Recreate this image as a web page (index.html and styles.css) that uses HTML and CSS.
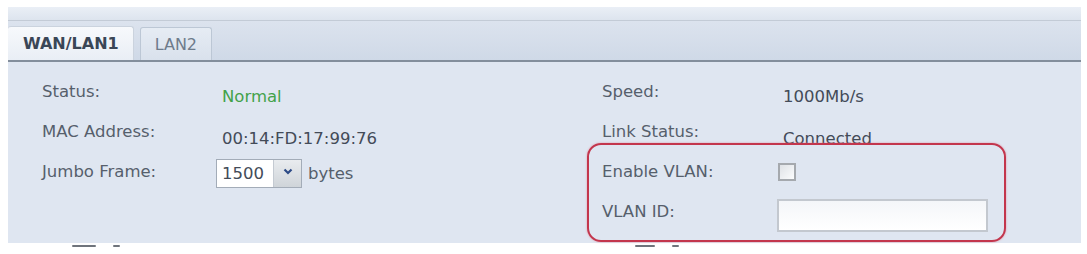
FILE: index.html
```html
<!DOCTYPE html>
<html lang="en">
<head>
  <meta charset="UTF-8">
  <title>Network - WAN/LAN1</title>
  <link rel="stylesheet" href="styles.css">
</head>
<body>
  <div class="panel">
    <div class="panel-top"></div>
    <!-- Tabs -->
    <div class="tab-bar">
      <div class="tab active">WAN/LAN1</div>
      <div class="tab">LAN2</div>
    </div>
    <!-- Interface settings -->
    <div class="form-grid">
      <div class="label">Status:</div>
      <div class="value ok">Normal</div>
      <div class="label">Speed:</div>
      <div class="value">1000Mb/s</div>

      <div class="label">MAC Address:</div>
      <div class="value mac">00:14:FD:17:99:76</div>
      <div class="label">Link Status:</div>
      <div class="value link">Connected</div>

      <div class="label">Jumbo Frame:</div>
      <div class="field">
        <div class="select">
          <span class="select-text">1500</span>
          <span class="select-btn">
            <svg width="10" height="7" viewBox="0 0 10 7"><path d="M1.5 1.5 L5 5 L8.5 1.5" fill="none" stroke="#2c4a86" stroke-width="2.2"/></svg>
          </span>
        </div>
        <span class="unit">bytes</span>
      </div>
      <div class="label">Enable VLAN:</div>
      <div class="field"><span class="checkbox"></span></div>

      <div class="label"></div>
      <div class="field"></div>
      <div class="label">VLAN ID:</div>
      <div class="field"><input type="text" class="text-input"></div>
    </div>
    <!-- Highlight drawn around the VLAN settings -->
    <div class="vlan-mark"></div>
  </div>
  <!-- Next section headers, cut off by the window -->
  <div class="next-section">
    <span class="cut cut-a"></span><span class="cut cut-b"></span>
    <span class="cut cut-c"></span><span class="cut cut-d"></span>
  </div>
</body>
</html>
```

FILE: styles.css
```css
body {
  margin: 0;
  padding: 0;
  background: #fff;
  font-family: 'DejaVu Sans', Verdana, sans-serif;
  overflow: hidden;
}
.panel {
  position: relative;
  margin: 7px 6px 0 8px;
  background: #dfe6f1;
}
.panel-top {
  height: 13px;
  background: linear-gradient(#eaeff6, #dde4ee);
  border-bottom: 1px solid #c3cbd6;
}
.tab-bar {
  height: 39px;
  display: flex;
  align-items: flex-end;
  gap: 6px;
  background: linear-gradient(#dce3ee, #cfd9e7);
  border-bottom: 2px solid #838e9c;
}
.tab {
  height: 33px;
  box-sizing: border-box;
  padding: 0 14px;
  display: flex;
  align-items: center;
  font-size: 16px;
  color: #6e7b8b;
  background: linear-gradient(#e6ecf4, #d9e1ec);
  border: 1px solid #bcc7d5;
  border-bottom: none;
  border-radius: 3px 3px 0 0;
}
.tab.active {
  padding: 0 14px 0 15px;
  height: 34px;
  font-weight: bold;
  color: #3a4656;
  background: linear-gradient(#f7f9fc, #e9eef5);
  border-color: #cbd3de;
  border-left: none;
}
.form-grid {
  display: grid;
  grid-template-columns: 174px 386px 175px 1fr;
  grid-auto-rows: 40px;
  padding: 10px 0 11px 34px;
  font-size: 16.5px;
  color: #565f6c;
}
.label {
  display: flex;
  align-items: center;
  padding-bottom: 1px;
}
.value {
  display: flex;
  align-items: center;
  padding: 9px 0 0 6px;
  color: #434b58;
}
.value.ok {
  color: #43a249;
}
.value.mac,
.value.link {
  padding-top: 13px;
}
.field {
  display: flex;
  align-items: center;
  padding-top: 3px;
}
.select {
  display: flex;
  width: 86px;
  height: 29px;
  box-sizing: border-box;
  border: 1px solid #a3acb8;
  background: #fff;
}
.select-text {
  flex: 1;
  display: flex;
  align-items: center;
  padding-left: 5px;
  color: #434b58;
}
.select-btn {
  width: 27px;
  display: flex;
  align-items: center;
  justify-content: center;
  padding-bottom: 4px;
  background: linear-gradient(#e9ecef, #cfd4d9);
  border-left: 1px solid #c4cad2;
}
.unit {
  margin-left: 6px;
  color: #565f6c;
}
.checkbox {
  width: 18px;
  height: 18px;
  margin: -4px 0 0 1px;
  box-sizing: border-box;
  border: 2px solid #a5a9ae;
  background: linear-gradient(135deg, #dfe2e6, #fbfcfd);
}
.text-input {
  width: 211px;
  height: 33px;
  box-sizing: border-box;
  margin: 4px 0 0 0;
  border: 2px solid #c3c8cf;
  background: linear-gradient(#f4f6f9, #ffffff);
  outline: none;
}
.vlan-mark {
  position: absolute;
  left: 579px;
  top: 136px;
  width: 419px;
  height: 99px;
  box-sizing: border-box;
  border: 2px solid #c3364d;
  border-radius: 14px;
  box-shadow: 0 0 2px rgba(230, 120, 140, 0.8);
}
.next-section {
  position: relative;
  height: 10px;
}
.cut {
  position: absolute;
  top: 2px;
  height: 2px;
  background: #6f747c;
  border-radius: 1px;
}
.cut-a { left: 72px; width: 24px; }
.cut-b { left: 113px; width: 7px; }
.cut-c { left: 635px; width: 20px; }
.cut-d { left: 672px; width: 7px; }
```
